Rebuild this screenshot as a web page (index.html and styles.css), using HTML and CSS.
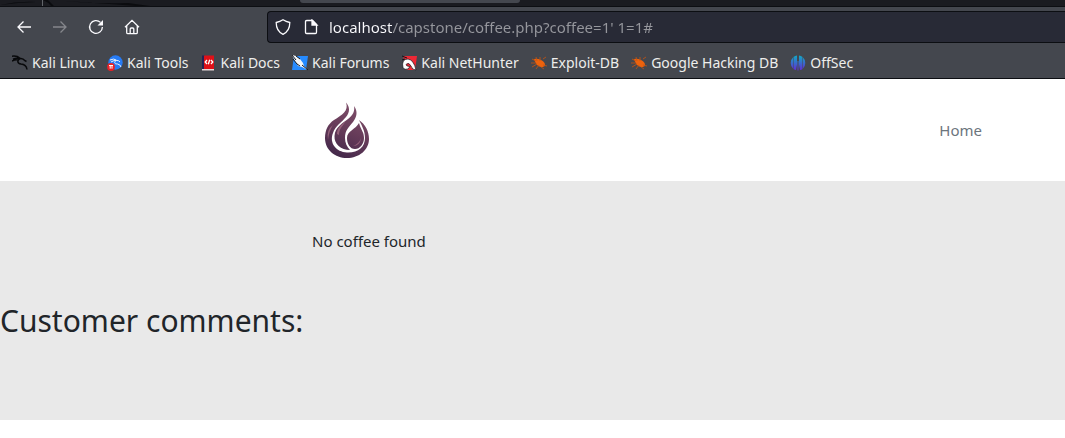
FILE: index.html
```html
<!DOCTYPE html>
<html lang="en">
<head>
<meta charset="utf-8">
<title>Coffee</title>
<link rel="stylesheet" href="styles.css">
</head>
<body>
<div class="browser">
  <div class="tabs">
    <svg class="theme-art" viewBox="0 0 160 6" aria-hidden="true"><path d="M42.500 0V6" stroke="#62656a"/><path d="M43 0Q48 2 51 6H54L48 0ZM64 1Q96 4 128 3L150 6H136Q96 3 64 1ZM0 5Q18 1 36 2L18 3Z" fill="#0b0c0f"/></svg>
    <div class="tab"></div>
  </div>
  <div class="toolbar">
    <div class="nav">
      <button class="tool" aria-label="Back"><svg viewBox="0 0 16 16"><path d="M15 8H2M7.500 2.500 2 8l5.500 5.500"/></svg></button>
      <button class="tool off" aria-label="Forward" disabled><svg viewBox="0 0 16 16"><path d="M1 8h13M8.500 2.500 14 8l-5.500 5.500"/></svg></button>
      <button class="tool" aria-label="Reload"><svg viewBox="0 0 16 16"><path d="M12.500 3.400A6.400 6.400 0 1 0 14.400 8"/><path d="M15 1v5.500H9.500Z" fill="currentColor" stroke="none"/></svg></button>
      <button class="tool" aria-label="Home page"><svg viewBox="0 0 16 16"><path d="M1 8.300 8 1.300l7 7M2.700 7v6.500q0 1.200 1.200 1.200h8.200q1.200 0 1.200-1.200V7M6.200 14.500V10q0-1 1-1h1.600q1 0 1 1v4.500"/></svg></button>
    </div>
    <label class="address">
      <svg viewBox="0 0 16 16" aria-hidden="true"><path d="M8 .8Q11 2.700 14.800 3.500C14.800 9 13 13 8 15.300 3 13 1.200 9 1.200 3.500Q5 2.700 8 .8Z"/></svg>
      <svg class="page-icon" viewBox="0 0 16 16" aria-hidden="true"><path d="M3.700 1.500h5.800l4 4v7.800q0 1.200-1.200 1.200H3.700q-1.200 0-1.200-1.200V2.700q0-1.200 1.200-1.200Z"/><path d="M9 1v5h5Z" fill="currentColor"/></svg>
      <input class="url" type="text" aria-label="Address" value="localhost/capstone/coffee.php?coffee=1' 1=1#" spellcheck="false">
    </label>
  </div>
  <nav class="bookmarks" aria-label="Bookmarks">
    <a href="#"><svg viewBox="0 0 16 16"><path d="M0 1.200Q5 .5 8 3.200M1 4.300Q5 2.500 8.500 4M0 6Q3 4.500 6 4.900M8 3.500q3-.5 5 2.200l1.500.8M8 3.500C5 5 5 8.500 9 9c4 .3 5.500 2 6 5.500" fill="none" stroke="#08090b" stroke-width="1.500"/></svg>Kali Linux</a>
    <a href="#"><svg viewBox="0 0 16 16"><circle cx="8.500" cy="7.500" r="7.200" fill="#267bf5"/><path d="M3 5q4-2 6.500.2M4 7q3-2 5.500-1.500 2-.5 3.500 1.500M9 5.500C6.500 8 8 9 10.500 9q3 .5 3.500 3" fill="none" stroke="#e7f2ff" stroke-width="1"/><circle cx="4" cy="12" r="3.900" fill="#e82127"/><path d="M2 10.500h4M3.200 10.500v3.200M5 10.500v3.200" stroke="#fff" fill="none"/></svg>Kali Tools</a>
    <a href="#"><svg viewBox="0 0 16 16"><path d="M1 .5h3V15H1Z" fill="#252355"/><path d="M3 .5h10V14H3Z" fill="#df1118"/><path d="M1 14h12v1.500H1Z" fill="#e6d9d9"/><path d="M6 5 4.200 7 6 9M10 5l1.800 2L10 9M8.700 4.700 7.300 9.300" fill="none" stroke="#fff" stroke-width="1.300"/></svg>Kali Docs</a>
    <a href="#"><svg viewBox="0 0 16 16"><path d="M2 1h14l-2 14H0Z" fill="#268bff"/><path d="M0 0 4 1 8 4 11 8 12 11 16 15 10 12 6 11 3 6Z" fill="#f3f5f7"/><path d="m0 0 4 5M1 4l4 5 3 2M10 10l6 5M4 1l4 3" stroke="#17191e" fill="none"/></svg>Kali Forums</a>
    <a href="#"><svg viewBox="0 0 16 16"><path d="M2 1h14l-2 14H6Z" fill="#ed2835"/><path d="M2 13Q0 4 7 4q6 1 8 11-4 0-5-4Q8 7 5.500 9 4 11 9 11.500L7 14Q4 15 2 13Z" fill="#fff" stroke="#15171c" stroke-width=".7"/><path d="m1 1 5 2M1 5l3-1" stroke="#111318"/></svg>Kali NetHunter</a>
    <a href="#"><svg viewBox="0 0 16 16"><path d="M3 4q3-1 7 1 4 2 4 5 0 2-4 2-5-1-7-8Z" fill="#ed620d"/><path d="M1 4l4 2M5 2l1 4M9 2v4M12 4l3-2M0 8h5M1 12l5-3M5 14l3-4M10 12l3 2M12 10l4 1" stroke="#c8540f" stroke-width=".8"/></svg>Exploit-DB</a>
    <a href="#"><svg viewBox="0 0 16 16"><path d="M3 4q3-1 7 1 4 2 4 5 0 2-4 2-5-1-7-8Z" fill="#ed620d"/><path d="M1 4l4 2M5 2l1 4M9 2v4M12 4l3-2M0 8h5M1 12l5-3M5 14l3-4M10 12l3 2M12 10l4 1" stroke="#c8540f" stroke-width=".8"/></svg>Google Hacking DB</a>
    <a href="#"><svg viewBox="0 0 16 16"><defs><linearGradient id="offsec" x2="0" y2="1"><stop stop-color="#11a9c4"/><stop offset="1" stop-color="#622bd5"/></linearGradient></defs><path d="M3 2.500v11Q.7 11.500.7 8T3 2.500ZM3.500 2Q5 .7 7 .5v9L6 15Q5 15 3.500 14ZM8.500 6v9.500h-1V6ZM9 .5q2 .2 3.500 1.500V14q-1 1-2.500 1L9 9.500ZM13 2.500q2.300 2 2.300 5.500T13 13.500Z" fill="url(#offsec)"/></svg>OffSec</a>
  </nav>
</div>
<header class="site-header">
  <a class="logo" href="#" aria-label="Coffee"><svg viewBox="0 0 44 56"><defs><linearGradient id="flame" gradientUnits="userSpaceOnUse" x1="36" y1="4" x2="12" y2="56"><stop stop-color="#80506a"/><stop offset=".5" stop-color="#663b59"/><stop offset="1" stop-color="#42284a"/></linearGradient></defs><path d="M21 .5C25 5 25 10 21 15 17 20 10 24 8 31 4 41 11 50 22 50.500 33 51 40 45 40 36 40 29 37 24 34 18 40 22 44 29 44 37 44 48 34 56 22 56S0 48 0 36C0 28 3 22 9 18 17 13 24 9 21 .5Z" fill="url(#flame)"/><path d="M29 4C33 9 32 15 28 20 24 25 20 28 20 36 20 41 22 45 25 48 16 48 9 42 9.500 34 10 25 18 21 23 17 28 13 30 9 29 4Z" fill="url(#flame)"/><path d="M34 21C36 28 39 30 39 36 39 42 35 47 30 47 25 47 22 42 22 36 22 29 31 27 34 21Z" fill="url(#flame)"/><path d="M12 32c0-6 4-9 9-13-4 6-7 8-7 14ZM36 36q-1 8-8 8 6-2 8-8ZM3 38Q1 28 8 23 4 29 3 38" fill="#936079"/></svg></a>
  <a class="home" href="#">Home</a>
</header>
<main class="content">
  <p class="message">No coffee found</p>
  <h2 class="comments">Customer comments:</h2>
</main>
</body>
</html>
```
FILE: styles.css
```css
* { box-sizing: border-box; }
body { margin: 0; background: #fff; color: #212529; font: 15px/24px "Noto Sans", sans-serif; }
a { color: inherit; text-decoration: none; }
.browser { background: #44474e; border-bottom: 1px solid #0c0e12; color: #eeeeec; font-size: 14px; }
.tabs { display: flex; height: 7px; background: #1a1b20; border-bottom: 1px solid #0c0e12; }
.theme-art { width: 160px; height: 6px; }
.tab { width: 220px; height: 3px; margin-left: 140px; background: #44474e; border-radius: 0 0 3px 3px; }
.toolbar { display: flex; align-items: center; padding-top: 4px; }
.nav { display: flex; gap: 4px; width: 267px; padding-left: 8px; flex: none; }
.tool { display: grid; place-items: center; width: 32px; height: 32px; padding: 0; border: 0; background: none; color: #fbfbfe; }
.tool svg, .address svg { width: 16px; height: 16px; flex: none; fill: none; stroke: currentColor; stroke-width: 1.3; }
.off { color: #85878c; }
.address { display: flex; align-items: center; flex: 1; height: 32px; padding-left: 7px; background: #282a36; border: 1px solid #0c0e12; border-right: 0; border-radius: 4px 0 0 4px; color: #fbfbfe; }
.address .page-icon { margin: 0 10px 0 12px; }
.url { flex: 1; min-width: 0; padding: 0; border: 0; outline: 0; font: 15px/24px "Noto Sans", sans-serif; color: #96979d; -webkit-text-fill-color: transparent; background: linear-gradient(90deg, #fbfbfe 63px, #96979d 63px); -webkit-background-clip: text; background-clip: text; }
.bookmarks { display: flex; gap: 12px; padding: 8px 12px 3px; white-space: nowrap; }
.bookmarks a { display: flex; align-items: center; gap: 4px; }
.bookmarks svg { width: 16px; height: 16px; }
.site-header { display: flex; align-items: center; justify-content: space-between; padding: 23px 83px 23px 325px; }
.logo svg { display: block; width: 44px; height: 56px; }
.home { color: #6c757d; }
.content { padding: 48px 0 79px; background: #e9e9e9; }
.message { margin: 0 0 48px; padding-left: 312px; }
.comments { margin: 0; font-size: 30px; line-height: 40px; font-weight: 400; }
```
